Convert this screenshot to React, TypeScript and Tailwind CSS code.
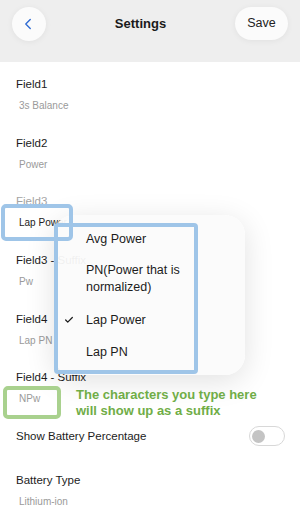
import { ChevronLeft, Check } from "lucide-react";

const fields = [
  { label: "Field1", value: "3s Balance" },
  { label: "Field2", value: "Power" },
  { label: "Field3", value: "Lap Power", dim: true },
  { label: "Field3 - Suffix", value: "Pw" },
  { label: "Field4", value: "Lap PN" },
  { label: "Field4 - Suffix", value: "NPw" },
];

const options = [
  { name: "Avg Power" },
  { name: "PN(Power that is normalized)" },
  { name: "Lap Power", checked: true },
  { name: "Lap PN" },
];

export default function App() {
  return (
    <div className="relative w-[300px] h-[513px] overflow-hidden bg-white text-[#1c1c1c] font-['Liberation_Sans',Arial,sans-serif]">
      {/* header */}
      <div className="h-[62px] bg-[#eeeeee] flex items-start justify-between px-[12px] pt-[7px]">
        <button className="w-[34px] h-[34px] rounded-full bg-[#fbfbfb] shadow-[0_1px_6px_rgba(0,0,0,0.06)] flex items-center justify-center">
          <ChevronLeft className="w-[18px] h-[18px] text-[#2f6bd3] -ml-[2px]" strokeWidth={1.8} />
        </button>
        <h1 className="text-[13px] font-bold leading-[34px] text-[#1a1a1a]">Settings</h1>
        <button className="w-[53px] h-[33px] rounded-full bg-[#fbfbfb] shadow-[0_1px_6px_rgba(0,0,0,0.06)] text-[12.5px] text-[#222]">
          Save
        </button>
      </div>

      <div className="pt-[4px]">
        {fields.map((f) => (
          <div key={f.label} className="h-[58.7px] pt-[10px] px-[16px]">
            <p className={`text-[11.5px] leading-[16px] ${f.dim ? "text-[#a3a3a3]" : "text-[#1c1c1c]"}`}>{f.label}</p>
            <p className={`mt-[6px] pl-[3px] text-[10px] leading-[16px] ${f.dim ? "text-[#222]" : "text-[#9a9a9a]"}`}>{f.value}</p>
          </div>
        ))}

        <div className="h-[36px] flex items-center justify-between pl-[16px] pr-[15px]">
          <span className="text-[11.5px] text-[#1c1c1c]">Show Battery Percentage</span>
          <div className="w-[36px] h-[20px] rounded-full border border-[#d8d8d8] bg-white flex items-center px-[2px]">
            <div className="w-[13px] h-[13px] rounded-full bg-[#c4c4c4]" />
          </div>
        </div>

        <div className="pt-[18px] px-[16px]">
          <p className="text-[11.5px] leading-[16px]">Battery Type</p>
          <p className="mt-[6px] pl-[3px] text-[10px] leading-[16px] text-[#9a9a9a]">Lithium-ion</p>
        </div>
      </div>

      {/* dropdown menu */}
      <div className="absolute left-[54px] top-[215px] w-[191px] h-[160px] rounded-[20px] bg-[#fbfbfb]/95 shadow-[0_6px_30px_rgba(0,0,0,0.12)] pt-[15px] pl-[32px]">
        {options.map((o, i) => (
          <div
            key={o.name}
            className={`relative w-[112px] text-[12.5px] text-[#1c1c1c] ${i === 1 ? "leading-[17px] mt-[14px]" : "leading-[18px]"} ${i === 2 ? "mt-[15px]" : ""} ${i === 3 ? "mt-[14px]" : ""}`}
          >
            {o.checked && (
              <Check className="absolute -left-[22px] top-[4px] w-[10px] h-[10px]" strokeWidth={3} />
            )}
            {o.name}
          </div>
        ))}
      </div>

      {/* annotations */}
      <div className="absolute left-[1px] top-[204px] w-[72px] h-[37px] rounded-[5px] border-[4px] border-[#9fc5e8]" />
      <div className="absolute left-[54px] top-[223px] w-[144px] h-[151px] rounded-[4px] border-[4px] border-[#9fc5e8]" />
      <div className="absolute left-[3px] top-[386px] w-[58px] h-[33px] rounded-[5px] border-[4px] border-[#a9d18e]" />
      <p className="absolute left-[76px] top-[387px] text-[13px] leading-[16px] font-bold text-[#70ad47]">
        The characters you type here
        <br />
        will show up as a suffix
      </p>
    </div>
  );
}
